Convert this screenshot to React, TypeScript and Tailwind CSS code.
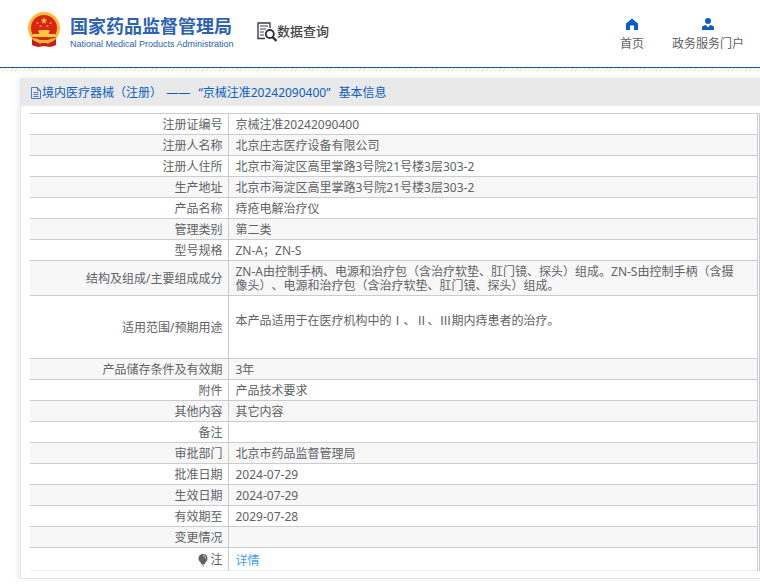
import React from "react";

const rows = [
  { label: "注册证编号", value: "京械注准20242090400" },
  { label: "注册人名称", value: "北京庄志医疗设备有限公司" },
  { label: "注册人住所", value: "北京市海淀区高里掌路3号院21号楼3层303-2" },
  { label: "生产地址", value: "北京市海淀区高里掌路3号院21号楼3层303-2" },
  { label: "产品名称", value: "痔疮电解治疗仪" },
  { label: "管理类别", value: "第二类" },
  { label: "型号规格", value: "ZN-A；ZN-S" },
  {
    label: "结构及组成/主要组成成分",
    value:
      "ZN-A由控制手柄、电源和治疗包（含治疗软垫、肛门镜、探头）组成。ZN-S由控制手柄（含摄像头）、电源和治疗包（含治疗软垫、肛门镜、探头）组成。",
  },
  {
    label: "适用范围/预期用途",
    value: "本产品适用于在医疗机构中的Ⅰ、Ⅱ、Ⅲ期内痔患者的治疗。",
    tall: true,
  },
  { label: "产品储存条件及有效期", value: "3年" },
  { label: "附件", value: "产品技术要求" },
  { label: "其他内容", value: "其它内容" },
  { label: "备注", value: "" },
  { label: "审批部门", value: "北京市药品监督管理局" },
  { label: "批准日期", value: "2024-07-29" },
  { label: "生效日期", value: "2024-07-29" },
  { label: "有效期至", value: "2029-07-28" },
  { label: "变更情况", value: "" },
];

const Emblem: React.FC = () => (
  <svg viewBox="0 0 32 36" className="h-9 w-8 shrink-0" aria-hidden="true">
    <path d="M4 22 L28 22 L28 33 L21 35 L16 34 L11 35 L4 33 Z" fill="#d9201c" />
    <circle cx="16" cy="16" r="16" fill="#f5bd2f" />
    <circle cx="16" cy="16" r="13" fill="#dc2219" />
    <path
      d="M16 5.500l.9 2.100 2.300.2-1.800 1.500.6 2.300-2-1.200-2 1.200.6-2.300-1.800-1.500 2.300-.2z"
      fill="#f9d23c"
    />
    <g fill="#f3b32f">
      <circle cx="9.5" cy="11" r="1" />
      <circle cx="22.5" cy="11" r="1" />
      <circle cx="12.5" cy="14" r="1" />
      <circle cx="19.5" cy="14" r="1" />
    </g>
    <path d="M11 18h10l1 2h-1v2h6v3H5v-3h6v-2h-1z" fill="#f8cd38" />
    <path d="M4 25h24l-2 3H6z" fill="#dc2219" />
    <path d="M4 26q5 0 8 2h8q3-2 8-2l-3 4-6 1H13l-6-1z" fill="#f5bd2f" />
    <path d="M4 28l7 3-1 4-6-2zM28 28l-7 3 1 4 6-2zM13 31h6v3h-6z" fill="#d0191b" />
  </svg>
);

const SearchDoc: React.FC = () => (
  <svg viewBox="0 0 20 20" className="size-5 shrink-0" fill="none" aria-hidden="true">
    <path d="M8 16.500H1V1h12v5" stroke="#3a3a4a" strokeWidth="1.4" />
    <path d="M3 4h8M3 7h6M3 10h4M3 13h4" stroke="#3a3a4a" strokeWidth="1.2" />
    <circle cx="12.8" cy="12" r="4" stroke="#2e2e40" strokeWidth="1.8" />
    <path d="M15.500 15l4 4" stroke="#2e2e40" strokeWidth="2.4" />
  </svg>
);

const HomeIcon: React.FC = () => (
  <svg viewBox="0 0 12 12" className="size-3" fill="#0a5fc4" aria-hidden="true">
    <path d="M6 0.500l6 5V12H8V7.500H4V12H0V5.500z" />
  </svg>
);

const UserIcon: React.FC = () => (
  <svg viewBox="0 0 12 12" className="size-3" fill="#0a5fc4" aria-hidden="true">
    <circle cx="6" cy="3" r="3" />
    <path d="M0 12V9.500Q0 8 2 7.500L4 7l2 2.500L8 7l2 .5q2 .5 2 2V12z" />
  </svg>
);

const FileIcon: React.FC = () => (
  <svg viewBox="0 0 12 12" className="size-3" fill="none" stroke="#1763bd" aria-hidden="true">
    <path d="M1.500.5h6l3 3v8h-9zM7.500.5v3h3M3.500 5.500h5M3.500 7.500h5M3.500 9.500h5" strokeWidth="0.8" />
  </svg>
);

const BulbIcon: React.FC = () => (
  <svg viewBox="0 0 10 12" className="h-3 w-2.5" aria-hidden="true">
    <circle cx="5" cy="4.5" r="4.5" fill="#606266" />
    <path d="M2.500 8h5l-.7 2H3.200zM3.500 10.500h3l-.5 1H4z" fill="#606266" />
    <path d="M5 1.500Q7.500 1.800 7.800 4.500" stroke="#ddd" fill="none" />
  </svg>
);

export default function App() {
  return (
    <div className="bg-white text-xs text-[#606266] [text-spacing-trim:space-all] font-['Noto_Sans','Noto_Sans_CJK_SC',sans-serif]">
      <header className="flex items-start justify-between border-b border-[#0a5cb0] pb-[13px] pl-7 pr-4">
        <div className="flex pt-3">
          <a href="#" className="flex gap-2.5 text-[#2b62b4]">
            <Emblem />
            <span className="flex w-40 flex-col pt-1 whitespace-nowrap">
              <span className="text-lg leading-5 font-bold">国家药品监督管理局</span>
              <span className="text-[9px] leading-4 font-['Liberation_Sans',sans-serif]">
                National Medical Products Administration
              </span>
            </span>
          </a>
          <a href="#" className="ml-[27px] flex pt-2.5 text-[13px] leading-[18px] font-medium text-[#444]">
            <SearchDoc />
            <span>数据查询</span>
          </a>
        </div>
        <nav className="flex gap-7 pt-[18px] leading-5">
          <a href="#" className="flex flex-col items-center gap-1">
            <HomeIcon />
            首页
          </a>
          <a href="#" className="flex flex-col items-center gap-1">
            <UserIcon />
            政务服务门户
          </a>
        </nav>
      </header>
      <div className="h-[3px] bg-[repeating-linear-gradient(135deg,#e4e4e4_0_1px,#ffffff_1px_3px)]" />

      <main className="mt-[7px] ml-5 border-b border-l border-[#e6e6ea] pb-[7px] shadow-[0_2px_8px_rgba(0,0,0,0.12)]">
        <h1 className="flex h-7 items-center bg-[#e9e9e9] pt-0.5 pl-[9px] whitespace-pre text-[#0a5fc4]">
          <FileIcon />
          <span>境内医疗器械（注册） </span>
          <span className="px-px">——</span>
          <span className="pl-px">  “京械注准20242090400”</span>
          <span className="pl-2">基本信息</span>
        </h1>
        <div className="mt-[7px] ml-[9px] border-r border-[#c8c8d0] pr-px">
          <table className="w-full table-fixed border-collapse border-b border-[#ebebf2] leading-[14px]">
            <colgroup>
              <col className="w-[198px]" />
              <col />
            </colgroup>
            <tbody>
              {rows.map((row) => (
                <tr key={row.label} className="border-t border-[#cccccc] even:bg-[#f7f7f7]">
                  <th scope="row" className="border-r border-[#cccccc] pt-1 pr-[5px] pb-0.5 text-right font-normal">
                    {row.label}
                  </th>
                  <td
                    className={
                      row.tall
                        ? "h-[63px] border-r border-[#cccccc] pr-3 pb-3 pl-[7px]"
                        : "border-r border-[#cccccc] pt-1 pr-3 pb-0.5 pl-[7px]"
                    }
                  >
                    {row.value}
                  </td>
                </tr>
              ))}
              <tr className="border-t border-[#cccccc]">
                <th scope="row" className="border-r border-[#cccccc] pt-1 pr-[5px] pb-0.5 font-normal">
                  <span className="flex items-center justify-end gap-0.5">
                    <BulbIcon />注
                  </span>
                </th>
                <td className="border-r border-[#cccccc] pt-[6px] pb-0.5 pl-[7px]">
                  <a href="#" className="text-[#409eff]">
                    详情
                  </a>
                </td>
              </tr>
            </tbody>
          </table>
        </div>
      </main>
    </div>
  );
}
